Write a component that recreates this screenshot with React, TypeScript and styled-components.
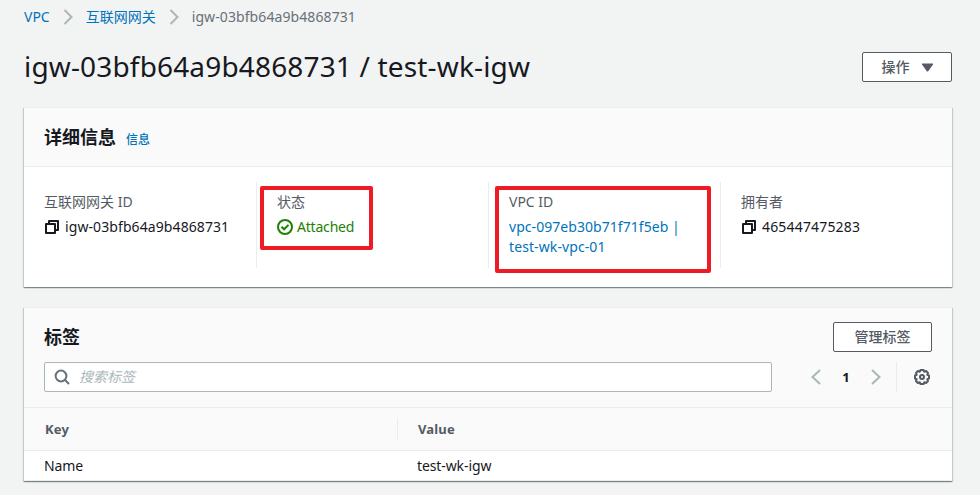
import React from "react";
import styled, { createGlobalStyle } from "styled-components";

const GlobalStyle = createGlobalStyle`
  * { box-sizing: border-box; }
  body {
    margin: 0;
    background: #f2f3f3;
    color: #16191f;
    font: 14px/20px "Noto Sans", "Noto Sans CJK SC", sans-serif;
  }
`;

const Page = styled.main`
  width: 980px;
  height: 495px;
  padding: 7px 28px 0 24px;
  overflow: hidden;
`;

const Text = styled.span<{ $track?: number }>`
  letter-spacing: ${(p) => p.$track ?? 0}px;
  white-space: nowrap;
`;

const Link = styled(Text)`
  color: #0073bb;
`;

const Breadcrumbs = styled.nav`
  display: flex;
  align-items: center;
  height: 20px;
  color: #687078;
`;

const Separator = styled.svg`
  width: 10px;
  height: 16px;
  margin: 0 13px;
  flex: none;
`;

const TitleBar = styled.header`
  display: flex;
  align-items: center;
  justify-content: space-between;
  height: 40px;
  margin: 20px 0;
`;

const Title = styled.h1`
  margin: 0;
  padding-bottom: 3px;
  font-size: 28px;
  font-weight: 400;
  line-height: 36px;
`;

const Button = styled.button<{ $width: number }>`
  display: flex;
  align-items: center;
  justify-content: center;
  gap: 12px;
  width: ${(p) => p.$width}px;
  height: 30px;
  padding: 0;
  border: 1px solid #545b64;
  border-radius: 2px;
  background: #fff;
  color: #545b64;
  font: 500 14px/20px "Noto Sans", "Noto Sans CJK SC", sans-serif;
`;

const Panel = styled.section`
  height: 180px;
  background: #fff;
  border-top: 1px solid #eaeded;
  box-shadow: 0 1px 1px 0 rgba(0, 28, 36, 0.3), 1px 1px 1px 0 rgba(0, 28, 36, 0.15),
    -1px 1px 1px 0 rgba(0, 28, 36, 0.15);
`;

const TagPanel = styled(Panel)`
  height: 174px;
  margin-top: 20px;
`;

const PanelHeader = styled.div`
  display: flex;
  align-items: baseline;
  gap: 10px;
  height: 59px;
  padding: 15px 20px 0;
  background: #fafafa;
  border-bottom: 1px solid #eaeded;
`;

const Heading = styled.h2`
  margin: 0;
  font-size: 18px;
  line-height: 28px;
  font-weight: 700;
`;

const InfoLink = styled(Link)`
  font-size: 12px;
  font-weight: 500;
`;

const Columns = styled.div`
  display: grid;
  grid-template-columns: repeat(4, 232px);
  padding-top: 15px;
`;

const Column = styled.div`
  position: relative;
  height: 86px;
  padding: 10px 20px 0;

  & + & {
    border-left: 1px solid #eaeded;
  }
`;

const Label = styled.div`
  margin-bottom: 5px;
  color: #545b64;
`;

const Value = styled.div<{ $gap?: number; $color?: string }>`
  display: flex;
  align-items: center;
  gap: ${(p) => p.$gap ?? 5}px;
  color: ${(p) => p.$color ?? "#16191f"};
`;

const StackedLink = styled(Link)`
  display: block;
`;

const Highlight = styled.div<{ $left: number; $width: number; $height: number }>`
  position: absolute;
  top: 4px;
  left: ${(p) => p.$left}px;
  width: ${(p) => p.$width}px;
  height: ${(p) => p.$height}px;
  border: 4px solid #ed1c24;
  border-radius: 2px;
`;

const Icon = styled.svg`
  display: block;
  width: 16px;
  height: 16px;
  flex: none;
`;

const Tools = styled.div`
  height: 100px;
  padding: 14px 20px 0;
  background: #fafafa;
  border-bottom: 1px solid #eaeded;
`;

const ToolRow = styled.div`
  display: flex;
  align-items: center;
  justify-content: space-between;
  height: 30px;
  margin-bottom: 10px;
`;

const Search = styled.div`
  display: flex;
  align-items: center;
  gap: 9px;
  width: 728px;
  height: 30px;
  padding-left: 9px;
  border: 1px solid #aab7b8;
  border-radius: 2px;
  background: #fff;
`;

const Placeholder = styled.span`
  color: #aab7b8;
  font-style: italic;
`;

const Pager = styled.div`
  display: flex;
  align-items: center;
  height: 30px;
`;

const PageNumber = styled.span`
  width: 44px;
  text-align: center;
  font-weight: 700;
  font-size: 13px;
`;

const Settings = styled.div`
  display: flex;
  align-items: center;
  height: 30px;
  margin-left: 12px;
  padding: 0 2px 0 17px;
  border-left: 1px solid #eaeded;
`;

const TableRow = styled.div<{ $head?: boolean }>`
  display: grid;
  grid-template-columns: 373px 1fr;
  align-items: center;
  height: ${(p) => (p.$head ? 43 : 30)}px;
  background: ${(p) => (p.$head ? "#fafafa" : "#fff")};
  border-bottom: 1px solid #eaeded;
  color: ${(p) => (p.$head ? "#545b64" : "#16191f")};
`;

const Cell = styled.div`
  padding-left: 20px;
  letter-spacing: -0.1px;
`;

const HeadCell = styled.div`
  height: 22px;
  padding-left: 21px;
  font-size: 13px;
  font-weight: 700;
  letter-spacing: 0.15px;
  line-height: 22px;

  & + & {
    padding-left: 20px;
    border-left: 1px solid #eaeded;
  }
`;

const Chevron = () => (
  <Separator viewBox="0 0 10 16" fill="none" stroke="#aab7b8" strokeWidth="2">
    <path d="M1.5 1L8.5 8L1.5 15" />
  </Separator>
);

const CopyIcon = () => (
  <Icon viewBox="0 0 16 16" fill="none" stroke="#16191f" strokeWidth="2">
    <path d="M2 5h9v9H2zM5 5V2h9v9h-3" strokeLinejoin="round" />
  </Icon>
);

const CheckIcon = () => (
  <Icon viewBox="0 0 16 16" fill="none" stroke="#1d8102" strokeWidth="2">
    <circle cx="8" cy="8" r="7" />
    <path d="M4.5 7.8l2.6 2.5 4.4-4.4" />
  </Icon>
);

const SearchIcon = () => (
  <Icon viewBox="0 0 16 16" fill="none" stroke="#687078" strokeWidth="2">
    <circle cx="7" cy="7" r="5.4" />
    <path d="M11 11l4 4" />
  </Icon>
);

const PageArrow = ({ next }: { next?: boolean }) => (
  <Icon viewBox="0 0 16 16" fill="none" stroke="#aab7b8" strokeWidth="2">
    <path d={next ? "M4 1l7.5 7L4 15" : "M12 1L4.5 8l7.5 7"} />
  </Icon>
);

const GearIcon = () => (
  <Icon viewBox="0 0 16 16" fill="none" stroke="#545b64" strokeWidth="2" strokeLinejoin="round">
    <path d="M6.5 1h3l.7 1.7 1.9-.7 1.9 1.9-.7 1.9 1.7.7v3l-1.7.7.7 1.9-1.9 1.9-1.9-.7L9.5 15h-3l-.7-1.7-1.9.7L2 12.1l.7-1.9L1 9.5v-3l1.7-.7L2 3.9 3.9 2l1.9.7z" />
    <circle cx="8" cy="8" r="2" />
  </Icon>
);

const Caret = () => (
  <svg width="11" height="9" viewBox="0 0 11 9" fill="#545b64">
    <path d="M0 .5h11v1L6 8.5H5L0 1.5z" />
  </svg>
);

export default function App() {
  return (
    <Page>
      <GlobalStyle />
      <Breadcrumbs>
        <Link>VPC</Link>
        <Chevron />
        <Link>互联网网关</Link>
        <Chevron />
        <Text $track={0.09}>igw-03bfb64a9b4868731</Text>
      </Breadcrumbs>
      <TitleBar>
        <Title>
          <Text $track={0.16}>igw-03bfb64a9b4868731 / test-wk-igw</Text>
        </Title>
        <Button $width={90}>
          操作
          <Caret />
        </Button>
      </TitleBar>
      <Panel>
        <PanelHeader>
          <Heading>详细信息</Heading>
          <InfoLink>信息</InfoLink>
        </PanelHeader>
        <Columns>
          <Column>
            <Label>互联网网关 ID</Label>
            <Value>
              <CopyIcon />
              <Text $track={0.09}>igw-03bfb64a9b4868731</Text>
            </Value>
          </Column>
          <Column>
            <Label>状态</Label>
            <Value $gap={4} $color="#1d8102">
              <CheckIcon />
              <Text $track={-0.2}>Attached</Text>
            </Value>
            <Highlight $left={3} $width={113} $height={64} />
          </Column>
          <Column>
            <Label>VPC ID</Label>
            <StackedLink $track={0.05}>vpc-097eb30b71f71f5eb |</StackedLink>
            <StackedLink $track={0.1}>test-wk-vpc-01</StackedLink>
            <Highlight $left={6} $width={216} $height={87} />
          </Column>
          <Column>
            <Label>拥有者</Label>
            <Value>
              <CopyIcon />
              <Text $track={0.17}>465447475283</Text>
            </Value>
          </Column>
        </Columns>
      </Panel>
      <TagPanel>
        <Tools>
          <ToolRow>
            <Heading>标签</Heading>
            <Button $width={99}>管理标签</Button>
          </ToolRow>
          <ToolRow>
            <Search>
              <SearchIcon />
              <Placeholder>搜索标签</Placeholder>
            </Search>
            <Pager>
              <PageArrow />
              <PageNumber>1</PageNumber>
              <PageArrow next />
              <Settings>
                <GearIcon />
              </Settings>
            </Pager>
          </ToolRow>
        </Tools>
        <TableRow $head>
          <HeadCell>Key</HeadCell>
          <HeadCell>Value</HeadCell>
        </TableRow>
        <TableRow>
          <Cell>Name</Cell>
          <Cell>test-wk-igw</Cell>
        </TableRow>
      </TagPanel>
    </Page>
  );
}
